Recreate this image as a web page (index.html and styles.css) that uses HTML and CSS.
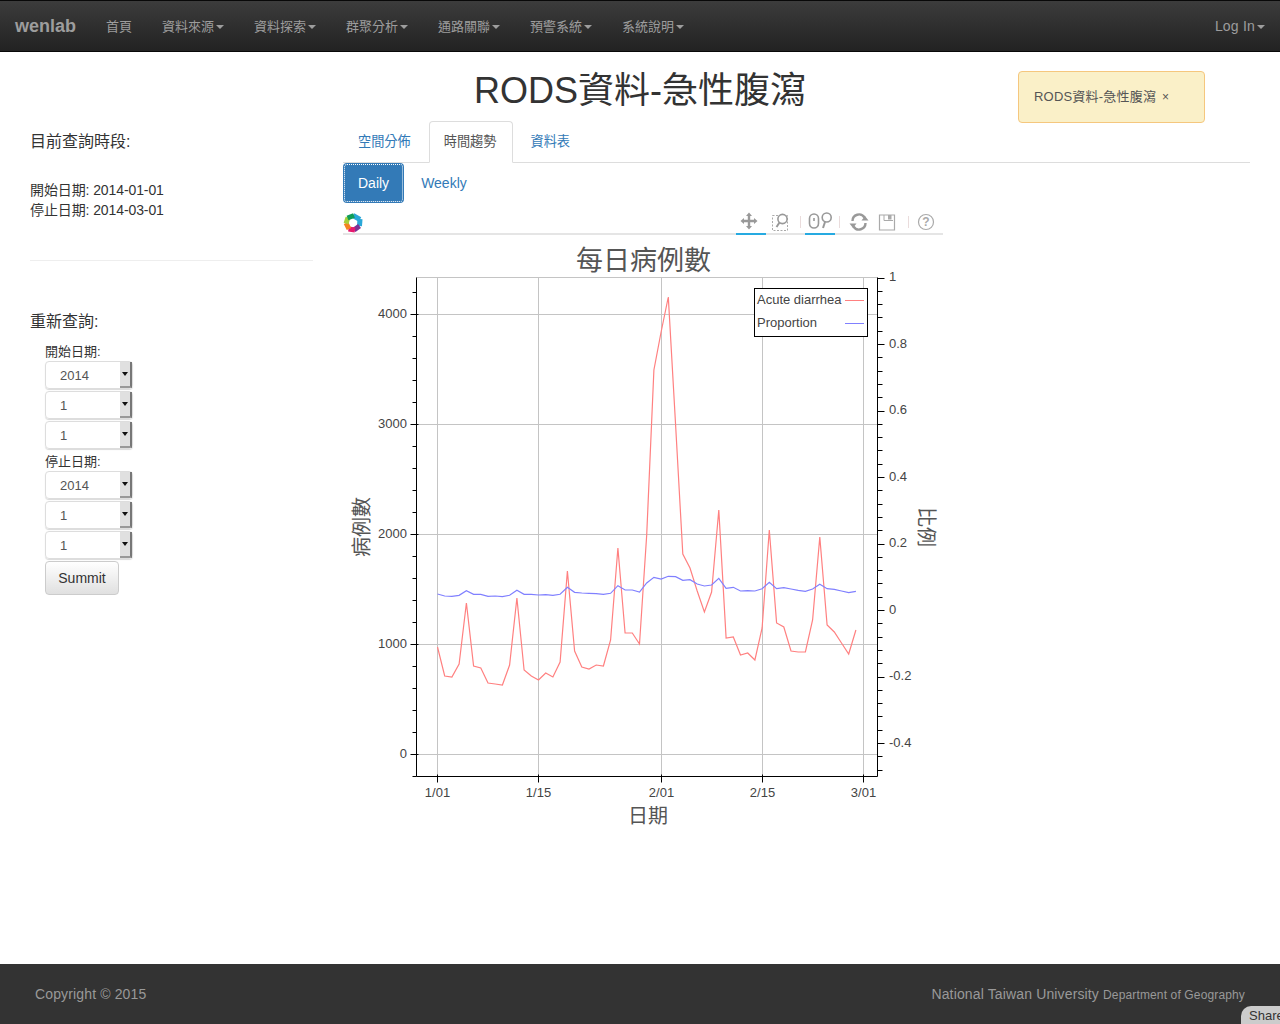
FILE: index.html
```html
<!DOCTYPE html>
<html lang="zh-Hant">

<head>
    <meta charset="UTF-8">
    <meta name="viewport" content="width=device-width, initial-scale=1.0">
    <title>RODS資料-急性腹瀉</title>

    <link rel="stylesheet" href="styles.css">
</head>

<body>
    <nav class="navbar">
        <a class="brand" href="#">wenlab</a>
        <ul class="nav-links">
            <li><a href="#">首頁</a></li>
            <li><a href="#">資料來源<span class="caret"></span></a></li>
            <li><a href="#">資料探索<span class="caret"></span></a></li>
            <li><a href="#">群聚分析<span class="caret"></span></a></li>
            <li><a href="#">通路關聯<span class="caret"></span></a></li>
            <li><a href="#">預警系統<span class="caret"></span></a></li>
            <li><a href="#">系統說明<span class="caret"></span></a></li>
        </ul>
        <a class="login" href="#">Log In<span class="caret"></span></a>
    </nav>

    <header class="page-head">
        <h1>RODS資料-急性腹瀉</h1>
        <div class="alert">RODS資料-急性腹瀉<span class="close">×</span></div>
    </header>

    <main class="content">
        <aside class="sidebar">
            <h4 class="period-title">目前查詢時段:</h4>
            <p class="period">開始日期: 2014-01-01<br>停止日期: 2014-03-01</p>
            <hr>
            <h4 class="query-title">重新查詢:</h4>
            <form class="query">
                <label>開始日期:</label>
                <div class="select">2014<span class="arrow"></span></div>
                <div class="select">1<span class="arrow"></span></div>
                <div class="select">1<span class="arrow"></span></div>
                <label>停止日期:</label>
                <div class="select">2014<span class="arrow"></span></div>
                <div class="select">1<span class="arrow"></span></div>
                <div class="select">1<span class="arrow"></span></div>
                <button class="summit" type="button">Summit</button>
            </form>
        </aside>

        <section class="main">
            <ul class="tabs">
                <li><a href="#">空間分佈</a></li>
                <li class="active"><a href="#">時間趨勢</a></li>
                <li><a href="#">資料表</a></li>
            </ul>
            <div class="pills">
                <a class="pill active" href="#">Daily</a>
                <a class="pill" href="#">Weekly</a>
            </div>

            <div class="toolbar">
                <svg class="logo" width="20" height="20" viewBox="0 0 20 20">
                    <g fill="none" stroke-width="5">
                        <path d="M10 2.5 L17 6.5" stroke="#2aa7d8"/>
                        <path d="M17 6 L16.5 13" stroke="#2aa7d8"/>
                        <path d="M16.5 13 L11 17" stroke="#7b3294"/>
                        <path d="M12 17 L5.5 16" stroke="#e6196e"/>
                        <path d="M6 16 L3 10" stroke="#f58220"/>
                        <path d="M3 10.5 L5 4.5" stroke="#a8cf3a"/>
                        <path d="M4.5 5 L11 2.5" stroke="#0f9d58"/>
                    </g>
                </svg>
                <div class="tools">
                    <span class="tool on">
                        <svg class="shift" width="18" height="18" viewBox="0 0 18 18"><path d="M9 0.5 L12 4 H10.2 V7.8 H14 V6 L17.5 9 L14 12 V10.2 H10.2 V14 H12 L9 17.5 L6 14 H7.8 V10.2 H4 V12 L0.5 9 L4 6 V7.8 H7.8 V4 H6 Z" fill="#999"/></svg>
                    </span>
                    <span class="tool">
                        <svg width="18" height="18" viewBox="0 0 18 18"><rect x="0.5" y="2.5" width="15" height="15" fill="none" stroke="#aaa" stroke-dasharray="2 1.5"/><circle cx="10.5" cy="6" r="4.6" fill="#fff" stroke="#999" stroke-width="1.6"/><path d="M7.5 9.5 L4.5 14" stroke="#999" stroke-width="2"/></svg>
                    </span>
                    <i class="sep"></i>
                    <span class="tool on">
                        <svg width="24" height="18" viewBox="0 0 24 18"><rect x="1.5" y="2" width="9" height="14" rx="4.5" fill="none" stroke="#999" stroke-width="1.6"/><path d="M6 6 V9" stroke="#999" stroke-width="1.6"/><circle cx="18.7" cy="5.5" r="4.5" fill="none" stroke="#999" stroke-width="1.6"/><path d="M17 10 L15 16" stroke="#999" stroke-width="2"/></svg>
                    </span>
                    <i class="sep"></i>
                    <span class="tool">
                        <svg width="20" height="18" viewBox="0 0 20 18"><path d="M3.5 8 A6.5 6.5 0 0 1 15.5 4.5" fill="none" stroke="#999" stroke-width="2.4"/><path d="M16.5 10 A6.5 6.5 0 0 1 4.5 13.5" fill="none" stroke="#999" stroke-width="2.4"/><path d="M12.5 7.5 H19.5 L16 3 Z M7.5 10.5 H0.5 L4 15 Z" fill="#999"/></svg>
                    </span>
                    <span class="tool">
                        <svg class="shift" width="18" height="18" viewBox="0 0 18 18"><path d="M1.5 2 H16.5 V17 H1.5 Z" fill="none" stroke="#aaa" stroke-width="1.2"/><rect x="10" y="2" width="3.5" height="4.5" fill="#aaa"/><path d="M6 2 V7.5 H15" fill="none" stroke="#aaa"/></svg>
                    </span>
                    <i class="sep"></i>
                    <span class="tool">
                        <svg class="shift" width="18" height="18" viewBox="0 0 18 18"><circle cx="9" cy="9" r="7.5" fill="none" stroke="#aaa" stroke-width="1.2"/><text x="9" y="13" text-anchor="middle" class="help">?</text></svg>
                    </span>
                </div>
            </div>

            <svg id="chart" class="chart" width="600" height="600" viewBox="343 235 600 600"></svg>
        </section>
    </main>

    <footer class="footer">
        <span class="copyright">Copyright © 2015</span>
        <span class="ntu">National Taiwan University <small>Department of Geography</small></span>
        <span class="share">Share</span>
    </footer>

    <script src="chart.js"></script>
</body>

</html>
```

FILE: styles.css
```css
* {
    box-sizing: border-box;
}

body {
    margin: 0;
    color: #333;
    font-size: 14px;
    line-height: 20px;
    background: #fff;
    font-family: "Liberation Sans", "Noto Sans CJK TC", sans-serif;
    display: flex;
    flex-direction: column;
    height: 1024px;
    overflow: hidden;
}

a {
    text-decoration: none;
}

ul {
    margin: 0;
    padding: 0;
    list-style: none;
}

/* top bar */
.navbar {
    display: flex;
    height: 52px;
    flex: none;
    align-items: center;
    padding: 0 15px;
    border-top: 1px solid #080808;
    border-bottom: 1px solid #080808;
    background: linear-gradient(to bottom, #3c3c3c, #222);
}

.brand {
    color: #9d9d9d;
    font-size: 18px;
    font-weight: bold;
    margin-right: 15px;
}

.nav-links {
    display: flex;
}

.nav-links a {
    color: #9d9d9d;
    display: block;
    padding: 1px 15px 0;
    font-size: 13px;
}

.login {
    color: #9d9d9d;
    margin-left: auto;
    font-size: 14px;
    letter-spacing: .2px;
}

.caret {
    display: inline-block;
    width: 0;
    height: 0;
    margin-left: 2px;
    vertical-align: middle;
    border-top: 4px solid;
    border-left: 4px solid transparent;
    border-right: 4px solid transparent;
}

/* title + notice */
.page-head {
    height: 69px;
    flex: none;
    position: relative;
    text-align: center;
}

.page-head h1 {
    margin: 0;
    padding-top: 17px;
    color: #333;
    font-size: 36px;
    font-weight: 400;
    line-height: 44px;
}

.alert {
    position: absolute;
    top: 19px;
    left: 1018px;
    width: 187px;
    height: 52px;
    padding: 15px;
    color: #555;
    font-size: 13px;
    letter-spacing: .2px;
    text-align: left;
    border-radius: 4px;
    border: 1px solid #f5c77e;
    background: #faf0c8;
}

.close {
    margin-left: 6px;
    font-size: 12px;
}

/* layout */
.content {
    display: flex;
    flex: 1;
    padding: 0 30px;
}

.sidebar {
    width: 283px;
    flex: none;
    margin-right: 30px;
}

.sidebar h4 {
    margin: 0;
    font-size: 16px;
    font-weight: 400;
    line-height: 20px;
}

.period-title {
    padding-top: 11px;
}

.period {
    margin: 28px 0 0;
    color: #333;
    font-size: 14px;
    line-height: 20px;
    letter-spacing: -.1px;
}

.sidebar hr {
    margin: 40px 0 51px;
    border: 0;
    border-top: 1px solid #eee;
}

.query {
    padding: 9px 0 0 15px;
    display: flex;
    flex-direction: column;
    align-items: flex-start;
}

.query label {
    font-size: 13px;
    line-height: 20px;
    height: 19px;
    margin-top: 1px;
}

.select {
    width: 88px;
    height: 28px;
    margin-bottom: 2px;
    padding: 4px 14px;
    color: #555;
    font-size: 13px;
    position: relative;
    border-radius: 4px;
    border: 1px solid #ddd;
    box-shadow: 0 1px 1px rgba(0, 0, 0, .15);
}

.arrow {
    position: absolute;
    top: 0;
    right: 0;
    bottom: 0;
    width: 12px;
    background: #e0e0e0;
    border-right: 2px solid #777;
    border-bottom: 2px solid #999;
}

.arrow::after {
    content: "";
    position: absolute;
    top: 10px;
    left: 2px;
    border-top: 4px solid #111;
    border-left: 3px solid transparent;
    border-right: 3px solid transparent;
}

.summit {
    width: 74px;
    height: 34px;
    padding: 0;
    color: #333;
    font-size: 14px;
    font-family: inherit;
    border-radius: 4px;
    border: 1px solid #ccc;
    background: linear-gradient(to bottom, #fff, #e0e0e0);
}

.main {
    flex: 1;
    min-width: 0;
}

/* tabs */
.tabs {
    display: flex;
    height: 42px;
    border-bottom: 1px solid #ddd;
}

.tabs li {
    margin-right: 3px;
}

.tabs a {
    display: block;
    height: 42px;
    padding: 10px 14px;
    color: #337ab7;
    font-size: 13.2px;
    border: 1px solid transparent;
    border-radius: 4px 4px 0 0;
}

.tabs .active a {
    color: #555;
    padding-right: 15px;
    background: #fff;
    border-color: #ddd #ddd #fff;
}

.pills {
    display: flex;
    height: 40px;
}

.pill {
    display: block;
    height: 40px;
    padding: 10px 15px;
    color: #337ab7;
    font-size: 14px;
    border-radius: 4px;
    margin-right: 2px;
}

.pill.active {
    color: #fff;
    background: #337ab7;
    outline: 1px dotted #fff;
    outline-offset: -2px;
}

/* plot toolbar */
.toolbar {
    display: flex;
    width: 600px;
    height: 26px;
    margin-top: 6px;
    align-items: flex-start;
    border-bottom: 2px solid #e5e5e5;
}

.logo {
    flex: none;
    margin-top: 4px;
}

.tools {
    display: flex;
    height: 26px;
    margin-left: auto;
}

.tool {
    display: flex;
    width: 30px;
    height: 26px;
    align-items: center;
    justify-content: center;
}

.tool.on {
    border-bottom: 2px solid #26aae1;
}

.shift {
    margin-left: -4px;
}

.sep {
    display: block;
    width: 1px;
    height: 12px;
    margin: 7px 4px 0;
    background: #eadcdc;
}

.help {
    fill: #aaa;
    font-size: 12px;
    font-weight: bold;
    font-family: "Liberation Sans", sans-serif;
}

.chart {
    display: block;
}

.chart text {
    fill: #444;
    font-size: 13px;
    font-family: "Liberation Sans", sans-serif;
}

.chart .label {
    fill: #555;
    font-size: 20px;
    font-family: "Noto Sans CJK TC", sans-serif;
}

.chart .plot-title {
    fill: #555;
    font-size: 27px;
    font-family: "Noto Sans CJK TC", sans-serif;
}

/* footer */
.footer {
    display: flex;
    height: 60px;
    flex: none;
    align-items: center;
    padding: 0 35px;
    color: #999;
    letter-spacing: .14px;
    position: relative;
    background: #333;
}

.ntu {
    margin-left: auto;
}

.ntu small {
    font-size: 12px;
}

.share {
    position: absolute;
    right: -5px;
    bottom: 0;
    width: 44px;
    height: 18px;
    padding: 1px 0 0 8px;
    color: #333;
    font-size: 13px;
    line-height: 18px;
    letter-spacing: 0;
    border-radius: 10px 0 0 0;
    background: #ccc;
}
```

FILE: chart.js
```js
// daily counts, given as pixel rows of the plot
const redY = [647, 676, 677, 664, 603, 666, 668, 683, 684, 685, 665, 598, 670, 676, 680, 673, 677, 662, 571, 651, 667, 669, 665, 666, 640, 548, 633, 633, 644, 535, 370, 332, 297, 425, 554, 568, 591, 612, 592, 510, 638, 637, 655, 653, 660, 628, 530, 623, 627, 651, 652, 652, 620, 537, 625, 632, 643, 654, 630]
const blueY = [594, 596, 596.3, 595.3, 590.7, 594.3, 594.3, 596.3, 596, 596.7, 595.3, 590.3, 594.3, 594.3, 595, 594.7, 595.3, 594.3, 587.3, 592.3, 593, 593.3, 593.7, 594.3, 593.3, 585.7, 590, 590, 592, 583, 577.3, 579, 576.3, 576.7, 580.3, 579.7, 584, 586, 585, 578.3, 588.3, 587.3, 591, 590.7, 591, 588.7, 582.3, 588.7, 587.7, 589, 590.3, 591.3, 589, 584.3, 588.7, 589.3, 591, 592.7, 591.3]

const svg = document.getElementById('chart')
const NS = 'http://www.w3.org/2000/svg'

function add(tag, attrs, txt) {
    const el = document.createElementNS(NS, tag)
    for (const k in attrs) el.setAttribute(k, attrs[k])
    if (txt) el.textContent = txt
    svg.appendChild(el)
    return el
}

function line(x1, y1, x2, y2, color) {
    add('line', { x1, y1, x2, y2, stroke: color, 'stroke-width': 1 })
}

const dayX = i => 437.5 + 7.214 * i
const GRID = '#c4c4c4'
const plotL = 416.5, plotR = 877.5, plotT = 277.5, plotB = 776.5

// grid
line(plotL, plotT, plotR, plotT, GRID)
;[314.5, 424.5, 534.5, 644.5, 754.5].forEach(y => line(plotL, y, plotR, y, GRID))
;[437.5, 538.5, 661.5, 762.5, 863.5].forEach(x => line(x, plotT, x, plotB, GRID))

// series
const pts = ys => ys.map((y, i) => dayX(i).toFixed(1) + ',' + y).join(' ')
add('polyline', { points: pts(redY), fill: 'none', stroke: '#ff8080', 'stroke-width': 1.2 })
add('polyline', { points: pts(blueY), fill: 'none', stroke: '#8080ff', 'stroke-width': 1.2 })

// frame
line(plotL, plotT, plotL, plotB, '#000')
line(plotL, plotB, plotR, plotB, '#000')
line(plotR, plotT, plotR, plotB, '#000')

// left axis
for (let i = -1; i <= 21; i++) {
    const y = 754.5 - i * 22
    if (y < plotT || y > plotB) continue
    if (i % 5 === 0) line(plotL - 6, y, plotL + 2, y, '#000')
    else line(plotL - 4, y, plotL, y, '#000')
}
;[[0, 754.5], [1000, 644.5], [2000, 534.5], [3000, 424.5], [4000, 314.5]].forEach(([v, y]) => {
    add('text', { x: 407, y: y + 3, 'text-anchor': 'end' }, String(v))
})

// right axis
for (let i = 0; i <= 37; i++) {
    const y = Math.round(plotT + i * 13.3) + 0.5
    if (y > plotB) continue
    line(plotR, y, plotR + (i % 5 === 0 ? 7 : 5), y, '#000')
}
;['1', '0.8', '0.6', '0.4', '0.2', '0', '-0.2', '-0.4'].forEach((t, i) => {
    add('text', { x: 889, y: 281 + i * 66.5 }, t)
})

// bottom axis
;[[437.5, '1/01'], [538.5, '1/15'], [661.5, '2/01'], [762.5, '2/15'], [863.5, '3/01']].forEach(([x, t]) => {
    line(x, plotB - 2, x, plotB + 6, '#000')
    add('text', { x, y: 797, 'text-anchor': 'middle' }, t)
})

// labels
add('text', { x: 643.5, y: 270, 'text-anchor': 'middle', class: 'plot-title' }, '每日病例數')
add('text', { x: 648, y: 823, 'text-anchor': 'middle', class: 'label' }, '日期')
add('text', { x: 0, y: 0, 'text-anchor': 'middle', class: 'label', transform: 'translate(369 527) rotate(-90)' }, '病例數')
add('text', { x: 0, y: 0, 'text-anchor': 'middle', class: 'label', transform: 'translate(919 527) rotate(90)' }, '比例')

// legend
add('rect', { x: 754.5, y: 288.5, width: 113, height: 48, fill: '#fff', stroke: '#000' })
add('text', { x: 757, y: 304 }, 'Acute diarrhea')
add('text', { x: 757, y: 327 }, 'Proportion')
line(845, 300.5, 864, 300.5, '#ff8080')
line(845, 323.5, 864, 323.5, '#8080ff')
```
